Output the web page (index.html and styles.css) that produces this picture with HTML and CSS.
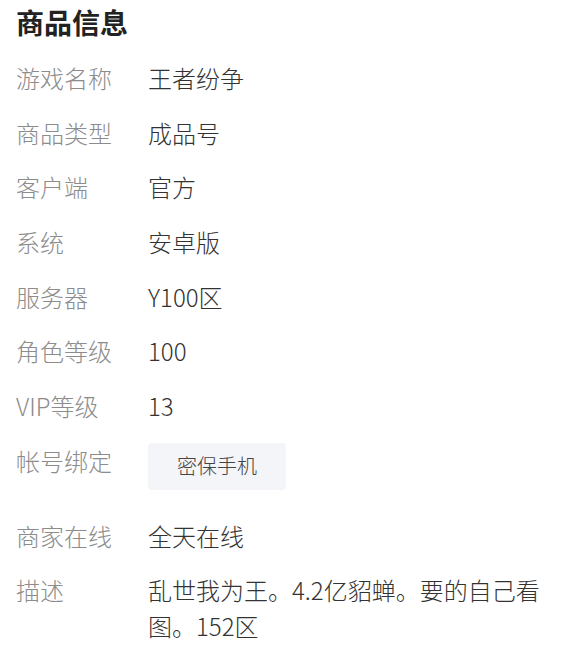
FILE: index.html
```html
<!DOCTYPE html>
<html lang="zh-CN">
<head>
<meta charset="utf-8">
<link rel="stylesheet" href="styles.css">
</head>
<body>
<div class="page">
  <h1 class="title">商品信息</h1>
  <div class="list">
    <div class="row"><div class="label">游戏名称</div><div class="value">王者纷争</div></div>
    <div class="row"><div class="label">商品类型</div><div class="value">成品号</div></div>
    <div class="row"><div class="label">客户端</div><div class="value">官方</div></div>
    <div class="row"><div class="label">系统</div><div class="value">安卓版</div></div>
    <div class="row"><div class="label">服务器</div><div class="value">Y100区</div></div>
    <div class="row"><div class="label">角色等级</div><div class="value">100</div></div>
    <div class="row"><div class="label">VIP等级</div><div class="value">13</div></div>
    <div class="row row-tags"><div class="label">帐号绑定</div><div class="value"><span class="tag">密保手机</span></div></div>
    <div class="row"><div class="label">商家在线</div><div class="value">全天在线</div></div>
    <div class="row"><div class="label">描述</div><div class="value">乱世我为王。4.2亿貂蝉。要的自己看图。152区</div></div>
  </div>
</div>
</body>
</html>
```
FILE: styles.css
```css
* { box-sizing: border-box; }
html, body {
  margin: 0;
  padding: 0;
  background: #ffffff;
}
body {
  font-family: "Noto Sans CJK SC", "Noto Sans", sans-serif;
}
.page {
  padding: 2px 16px 0 16px;
}
.title {
  margin: 0;
  font-size: 28px;
  line-height: 40px;
  font-weight: 700;
  color: #222222;
}
.list {
  display: flex;
  flex-direction: column;
  gap: 18.7px;
  margin-top: 18px;
}
.row {
  display: flex;
  align-items: flex-start;
  font-size: 24px;
  line-height: 36px;
  font-weight: 300;
}
.row-tags {
  margin-bottom: 9px;
}
.label {
  flex: 0 0 132px;
  color: #8c8c8c;
}
.value {
  flex: 1;
  color: #333333;
}
.tag {
  display: inline-flex;
  align-items: center;
  justify-content: center;
  width: 138px;
  height: 47px;
  background: #f4f5f8;
  border-radius: 4px;
  font-size: 20px;
  color: #444444;
}
```
